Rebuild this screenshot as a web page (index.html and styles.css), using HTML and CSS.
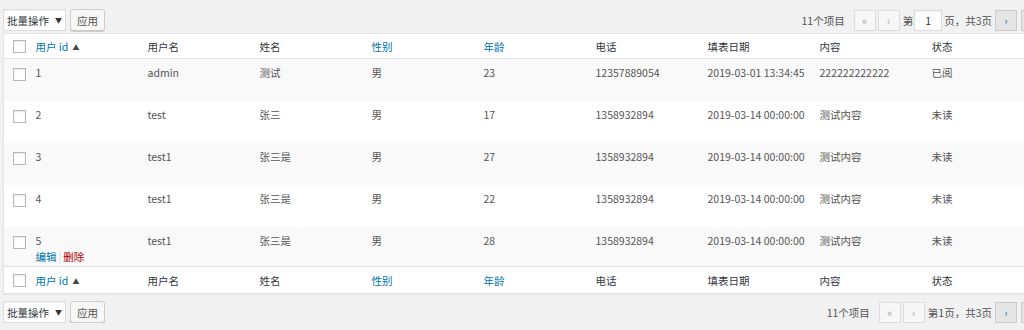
FILE: index.html
```html
<!DOCTYPE html>
<html lang="zh-CN">

<head>
    <meta charset="UTF-8">
    <title>用户列表</title>
    <link rel="stylesheet" href="styles.css">
</head>

<body>
    <div class="wrap">
        <div class="tablenav top">
            <div class="actions">
                <div class="select">批量操作<span class="arrow">▼</span></div>
                <button type="button" class="btn-apply">应用</button>
            </div>
            <div class="pages">
                <span class="count">11个项目</span>
                <span class="pbtn off">«</span>
                <span class="pbtn off">‹</span>
                <span class="paging">第<input type="text" value="1" class="cur">页，共3页</span>
                <a class="pbtn">›</a>
                <a class="pbtn">»</a>
            </div>
        </div>
        <table class="list">
            <colgroup>
                <col class="c-check">
                <col span="8" class="c-col">
                <col>
            </colgroup>
            <thead>
                <tr>
                    <th class="check"><span class="box"></span></th>
                    <th><a class="sort">用户 id <span class="tri">▲</span></a></th>
                    <th>用户名</th>
                    <th>姓名</th>
                    <th><a class="sort">性别</a></th>
                    <th><a class="sort">年龄</a></th>
                    <th>电话</th>
                    <th>填表日期</th>
                    <th>内容</th>
                    <th>状态</th>
                </tr>
            </thead>
            <tbody>
                <tr class="alt">
                    <td class="check"><span class="box"></span></td>
                    <td>1<div class="row-actions"><a>编辑</a><i>|</i><a class="del">删除</a></div></td>
                    <td>admin</td>
                    <td>测试</td>
                    <td>男</td>
                    <td>23</td>
                    <td>12357889054</td>
                    <td>2019-03-01 13:34:45</td>
                    <td>222222222222</td>
                    <td>已阅</td>
                </tr>
                <tr>
                    <td class="check"><span class="box"></span></td>
                    <td>2<div class="row-actions"><a>编辑</a><i>|</i><a class="del">删除</a></div></td>
                    <td>test</td>
                    <td>张三</td>
                    <td>男</td>
                    <td>17</td>
                    <td>1358932894</td>
                    <td>2019-03-14 00:00:00</td>
                    <td>测试内容</td>
                    <td>未读</td>
                </tr>
                <tr class="alt">
                    <td class="check"><span class="box"></span></td>
                    <td>3<div class="row-actions"><a>编辑</a><i>|</i><a class="del">删除</a></div></td>
                    <td>test1</td>
                    <td>张三是</td>
                    <td>男</td>
                    <td>27</td>
                    <td>1358932894</td>
                    <td>2019-03-14 00:00:00</td>
                    <td>测试内容</td>
                    <td>未读</td>
                </tr>
                <tr>
                    <td class="check"><span class="box"></span></td>
                    <td>4<div class="row-actions"><a>编辑</a><i>|</i><a class="del">删除</a></div></td>
                    <td>test1</td>
                    <td>张三是</td>
                    <td>男</td>
                    <td>22</td>
                    <td>1358932894</td>
                    <td>2019-03-14 00:00:00</td>
                    <td>测试内容</td>
                    <td>未读</td>
                </tr>
                <tr class="alt hover last">
                    <td class="check"><span class="box"></span></td>
                    <td>5<div class="row-actions"><a>编辑</a><i>|</i><a class="del">删除</a></div></td>
                    <td>test1</td>
                    <td>张三是</td>
                    <td>男</td>
                    <td>28</td>
                    <td>1358932894</td>
                    <td>2019-03-14 00:00:00</td>
                    <td>测试内容</td>
                    <td>未读</td>
                </tr>
            </tbody>
            <tfoot>
                <tr>
                    <th class="check"><span class="box"></span></th>
                    <th><a class="sort">用户 id <span class="tri">▲</span></a></th>
                    <th>用户名</th>
                    <th>姓名</th>
                    <th><a class="sort">性别</a></th>
                    <th><a class="sort">年龄</a></th>
                    <th>电话</th>
                    <th>填表日期</th>
                    <th>内容</th>
                    <th>状态</th>
                </tr>
            </tfoot>
        </table>
        <div class="tablenav bottom">
            <div class="actions">
                <div class="select">批量操作<span class="arrow">▼</span></div>
                <button type="button" class="btn-apply">应用</button>
            </div>
            <div class="pages">
                <span class="count">11个项目</span>
                <span class="pbtn off">«</span>
                <span class="pbtn off">‹</span>
                <span class="paging">第1页，共3页</span>
                <a class="pbtn">›</a>
                <a class="pbtn">»</a>
            </div>
        </div>
    </div>
</body>

</html>
```

FILE: styles.css
```css
* {
    box-sizing: border-box;
}

html,
body {
    overflow: hidden;
}

body {
    margin: 0;
    background: #f1f1f1;
    color: #444;
    font-family: "Noto Sans CJK SC", "Open Sans", sans-serif;
    font-size: 10.5px;
    white-space: nowrap;
}

.wrap {
    width: 1040px;
    margin-left: 3px;
}

/* top / bottom bars */
.tablenav {
    display: flex;
    justify-content: space-between;
    align-items: center;
    height: 22px;
}

.tablenav.top {
    margin: 9px 0 2px;
}

.tablenav.bottom {
    margin-top: 7px;
}

.actions {
    display: flex;
    gap: 4px;
    height: 22px;
}

.select {
    display: flex;
    align-items: center;
    width: 63px;
    padding: 0 0 0 3px;
    background: #fff;
    border: 1px solid #ddd;
    color: #32373c;
    box-shadow: inset 0 1px 2px rgba(0, 0, 0, .07);
}

.select .arrow {
    margin-left: 6px;
    font-size: 7px;
    color: #333;
}

.btn-apply {
    width: 35px;
    padding: 0;
    background: #f7f7f7;
    border: 1px solid #ccc;
    border-radius: 3px;
    color: #555;
    font: inherit;
    box-shadow: 0 1px 0 #ccc;
}

.pages {
    display: flex;
    align-items: center;
    gap: 2px;
    height: 22px;
    color: #555;
}

.count {
    margin-right: 7px;
}

.pbtn {
    display: flex;
    align-items: center;
    justify-content: center;
    width: 22px;
    height: 21px;
    border: 1px solid #ccc;
    background: #e5e5e5;
    color: #0073aa;
    font-size: 11px;
}

.pbtn.off {
    border-color: #ddd;
    background: #f7f7f7;
    color: #a0a5aa;
}

.pages .pbtn:last-child {
    margin-left: 2px;
}

.paging {
    display: flex;
    align-items: center;
    margin: 0 1px;
}

.cur {
    width: 28px;
    height: 21px;
    margin: 0 2px 0 1px;
    border: 1px solid #ddd;
    text-align: center;
    font: inherit;
    color: #32373c;
    box-shadow: inset 0 1px 2px rgba(0, 0, 0, .07);
}

/* list table */
.list {
    width: 1040px;
    table-layout: fixed;
    border-collapse: collapse;
    border: 1px solid #e5e5e5;
    background: #fff;
    box-shadow: 0 1px 1px rgba(0, 0, 0, .04);
}

.c-check {
    width: 22px;
}

.c-col {
    width: 112px;
}

th,
td {
    text-align: left;
    vertical-align: top;
    line-height: 14px;
    padding: 0 10px;
}

th {
    font-weight: normal;
    color: #32373c;
}

thead th {
    height: 25px;
    padding-top: 6px;
    border-bottom: 1px solid #e1e1e1;
}

tfoot th {
    height: 27px;
    padding-top: 7px;
    border-top: 1px solid #e1e1e1;
}

td {
    height: 42px;
    padding-top: 7px;
    color: #555;
}

tr.last td {
    height: 40px;
}

tr.alt td {
    background: #f9f9f9;
}

th.check,
td.check {
    padding: 0 0 0 9px;
}

thead th.check {
    padding-top: 6px;
}

tfoot th.check {
    padding-top: 7px;
}

td.check {
    padding-top: 9px;
}

.box {
    display: block;
    width: 13px;
    height: 13px;
    border: 1px solid #b4b9be;
    background: #fff;
    box-shadow: inset 0 1px 2px rgba(0, 0, 0, .1);
}

.sort {
    color: #0073aa;
}

.tri {
    font-size: 7px;
    color: #444;
    vertical-align: 1px;
    margin-left: 2px;
}

.row-actions {
    padding-top: 2px;
    visibility: hidden;
}

.hover .row-actions {
    visibility: visible;
}

.row-actions a {
    color: #0073aa;
}

.row-actions i {
    font-style: normal;
    color: #ddd;
    margin: 0 2px;
}

.row-actions a.del {
    color: #a00;
}
```
